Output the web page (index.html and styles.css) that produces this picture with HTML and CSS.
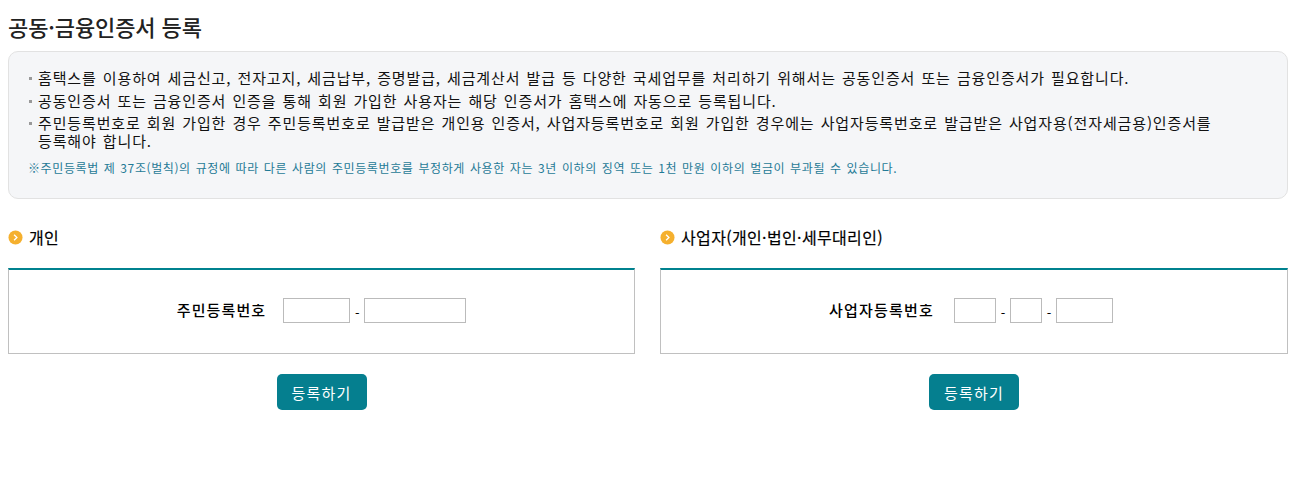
FILE: index.html
```html
<!DOCTYPE html>
<html lang="ko">
<head>
    <meta charset="UTF-8">
    <meta name="viewport" content="width=device-width, initial-scale=1.0">
    <title>공동·금융인증서 등록</title>
    <link rel="stylesheet" href="styles.css">
</head>
<body>
    <div class="container">
        <h1 class="page-title">공동·금융인증서 등록</h1>

        <div class="notice">
            <ul class="notice-list">
                <li>홈택스를 이용하여 세금신고, 전자고지, 세금납부, 증명발급, 세금계산서 발급 등 다양한 국세업무를 처리하기 위해서는 공동인증서 또는 금융인증서가 필요합니다.</li>
                <li>공동인증서 또는 금융인증서 인증을 통해 회원 가입한 사용자는 해당 인증서가 홈택스에 자동으로 등록됩니다.</li>
                <li>주민등록번호로 회원 가입한 경우 주민등록번호로 발급받은 개인용 인증서, 사업자등록번호로 회원 가입한 경우에는 사업자등록번호로 발급받은 사업자용(전자세금용)인증서를 등록해야 합니다.</li>
            </ul>
            <p class="notice-law">※주민등록법 제 37조(벌칙)의 규정에 따라 다른 사람의 주민등록번호를 부정하게 사용한 자는 3년 이하의 징역 또는 1천 만원 이하의 벌금이 부과될 수 있습니다.</p>
        </div>

        <div class="columns">
            <section class="column">
                <h2 class="section-title">
                    <svg class="bullet" viewBox="0 0 16 16"><circle cx="8" cy="8" r="7.5" fill="#f5b02e"/><path d="M6.5 5l3 3-3 3" fill="none" stroke="#fff" stroke-width="1.4"/></svg>
                    개인
                </h2>
                <div class="form-box">
                    <label class="form-label">주민등록번호</label>
                    <input class="field w-67" type="text">
                    <span class="dash">-</span>
                    <input class="field w-102" type="text">
                </div>
                <div class="actions"><button class="submit">등록하기</button></div>
            </section>

            <section class="column">
                <h2 class="section-title">
                    <svg class="bullet" viewBox="0 0 16 16"><circle cx="8" cy="8" r="7.5" fill="#f5b02e"/><path d="M6.5 5l3 3-3 3" fill="none" stroke="#fff" stroke-width="1.4"/></svg>
                    사업자(개인·법인·세무대리인)
                </h2>
                <div class="form-box form-box-biz">
                    <label class="form-label">사업자등록번호</label>
                    <input class="field w-42" type="text">
                    <span class="dash">-</span>
                    <input class="field w-32" type="text">
                    <span class="dash">-</span>
                    <input class="field w-57" type="text">
                </div>
                <div class="actions"><button class="submit">등록하기</button></div>
            </section>
        </div>
    </div>
</body>
</html>
```

FILE: styles.css
```css
body {
    margin: 0;
    background: #fff;
    color: #000;
    font-family: "Noto Sans CJK KR", "Noto Sans", sans-serif;
}

.container {
    width: 1280px;
    margin-left: 8px;
}

.page-title {
    margin: 0;
    padding-top: 11px;
    height: 40px;
    font-size: 22px;
    line-height: 30px;
    font-weight: 500;
    letter-spacing: -0.1px;
    color: #222;
}

.notice {
    box-sizing: border-box;
    height: 148px;
    padding: 17px 20px 0;
    background: #f5f6f8;
    border: 1px solid #e2e2e2;
    border-radius: 10px;
}

.notice-list {
    margin: 0;
    padding: 0;
    list-style: none;
    font-size: 15px;
    line-height: 18px;
    letter-spacing: 0.87px;
    word-spacing: 1.05px;
    word-break: keep-all;
}

.notice-list li {
    position: relative;
    width: 1195px;
    padding-left: 9px;
    margin-bottom: 4.5px;
    color: #111;
}

.notice-list li::before {
    content: "";
    position: absolute;
    left: 0;
    top: 8px;
    width: 3px;
    height: 3px;
    background: #999;
}

.notice-law {
    margin: 10px 0 0 -1px;
    font-size: 12px;
    line-height: 16px;
    letter-spacing: 0.6px;
    word-spacing: 1px;
    color: #1f7a96;
}

.columns {
    display: grid;
    grid-template-columns: 627px 628px;
    gap: 25px;
    margin-top: 26px;
}

.section-title {
    display: flex;
    align-items: center;
    gap: 6px;
    margin: 0 0 19px;
    height: 24px;
    font-size: 16px;
    font-weight: 400;
    letter-spacing: 0.35px;
    -webkit-text-stroke: 0.2px #000;
}

.bullet {
    width: 15px;
    height: 15px;
}

.form-box {
    box-sizing: border-box;
    height: 86px;
    display: flex;
    align-items: center;
    justify-content: center;
    border: 1px solid #c0c0c0;
    border-top: 2px solid #00828f;
    padding-bottom: 2px;
}

.form-box-biz {
    padding-right: 6px;
}

.form-box-biz .form-label {
    margin-right: 20px;
    letter-spacing: 1.2px;
}

.form-label {
    font-size: 15px;
    font-weight: 500;
    letter-spacing: 1.1px;
    margin-right: 17px;
    position: relative;
    top: -1px;
}

.field {
    box-sizing: border-box;
    height: 25px;
    border: 1px solid #bbb;
    background: #fff;
    padding: 0;
}

.w-67 { width: 67px; }
.w-102 { width: 102px; }
.w-42 { width: 42px; }
.w-32 { width: 32px; }
.w-57 { width: 57px; }

.dash {
    width: 14px;
    text-align: center;
    font-size: 13px;
    padding-top: 4px;
}

.actions {
    display: flex;
    justify-content: center;
    margin-top: 20px;
}

.submit {
    width: 90px;
    height: 36px;
    background: #057f8f;
    color: #fff;
    border: none;
    border-radius: 5px;
    font-family: inherit;
    font-size: 15px;
    letter-spacing: 1.2px;
    padding: 0;
}
```
